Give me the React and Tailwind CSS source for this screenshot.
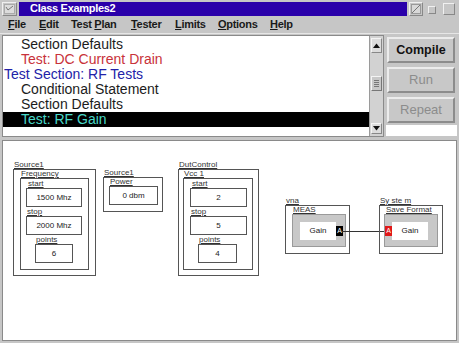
import React from 'react'

const rows = [
  { text: 'Section Defaults', indent: true, color: 'text-[#1c1c1c]' },
  { text: 'Test: DC Current Drain', indent: true, color: 'text-[#c8323a]' },
  { text: 'Test Section: RF Tests', indent: false, color: 'text-[#2222a8]' },
  { text: 'Conditional Statement', indent: true, color: 'text-[#1c1c1c]' },
  { text: 'Section Defaults', indent: true, color: 'text-[#1c1c1c]' },
  { text: 'Test: RF Gain', indent: true, color: 'text-[#48d8c8]', selected: true },
]

const menus = [
  { pre: '', key: 'F', post: 'ile', w: 'w-[31px]' },
  { pre: '', key: 'E', post: 'dit', w: 'w-[32px]' },
  { pre: 'Test ', key: 'P', post: 'lan', w: 'w-[60px]' },
  { pre: '', key: 'T', post: 'ester', w: 'w-[44px]' },
  { pre: '', key: 'L', post: 'imits', w: 'w-[43px]' },
  { pre: '', key: 'O', post: 'ptions', w: 'w-[52px]' },
  { pre: '', key: 'H', post: 'elp', w: 'w-[40px]' },
]

function Lbl({ children, className = '' }) {
  return (
    <div className={`h-[8px] text-[8px] leading-[8px] underline text-[#333] whitespace-nowrap ${className}`}>
      {children}
    </div>
  )
}

function Field({ label, value, w, boxMl, lblMl }) {
  return (
    <div className={boxMl}>
      <Lbl className={lblMl}>{label}</Lbl>
      <div className={`${w} h-[19px] border border-[#555] flex items-center justify-center text-[8px] text-[#222]`}>
        {value}
      </div>
    </div>
  )
}

function RangeGroup({ title, sub, left, outerW, innerW, innerMl, startW, startMl, pointsW, values }) {
  return (
    <div className={`absolute top-[20px] ${left}`}>
      <Lbl className="ml-[1px]">{title}</Lbl>
      <div className={`${outerW} h-[107px] border border-[#555] ${innerMl}`}>
        <Lbl className="ml-[1px]">{sub}</Lbl>
        <div className={`${innerW} h-[92px] border border-[#555] pt-[1px] flex flex-col gap-[1px]`}>
          <Field label="start" value={values[0]} w={startW} boxMl={startMl} lblMl="ml-[2px]" />
          <Field label="stop" value={values[1]} w={startW} boxMl={startMl} lblMl="ml-[1px]" />
          <Field label="points" value={values[2]} w={pointsW} boxMl="ml-[14px]" lblMl="ml-[1px]" />
        </div>
      </div>
    </div>
  )
}

function Diagram() {
  return (
    <div className="relative mx-[2px] h-[201px] bg-white border border-[#8a8a8a] overflow-hidden font-['Liberation_Sans',Arial,sans-serif]">
      <RangeGroup
        title="Source1"
        sub="Frequency"
        left="left-[10px]"
        outerW="w-[83px]"
        innerMl="pl-[6px]"
        innerW="w-[69px]"
        startW="w-[56px]"
        startMl="ml-[5px]"
        pointsW="w-[38px]"
        values={['1500 Mhz', '2000 Mhz', '6']}
      />

      {/* Source1 power */}
      <div className="absolute left-[100px] top-[28px]">
        <Lbl className="ml-[1px]">Source1</Lbl>
        <div className="w-[60px] h-[35px] border border-[#555] pl-[5px]">
          <Lbl className="ml-[1px]">Power</Lbl>
          <div className="w-[49px] h-[19px] border border-[#555] flex items-center justify-center text-[8px] text-[#222]">
            0 dbm
          </div>
        </div>
      </div>

      <RangeGroup
        title="DutControl"
        sub="Vcc 1"
        left="left-[175px]"
        outerW="w-[81px]"
        innerMl="pl-[4px]"
        innerW="w-[70px]"
        startW="w-[57px]"
        startMl="ml-[6px]"
        pointsW="w-[39px]"
        values={['2', '5', '4']}
      />

      {/* vna */}
      <div className="absolute left-[282px] top-[56px]">
        <Lbl className="ml-[1px]">vna</Lbl>
        <div className="w-[65px] h-[49px] border border-[#555] pl-[6px]">
          <Lbl className="ml-[1px]">MEAS</Lbl>
          <div className="w-[54px] h-[33px] bg-[#c8c8c8] border border-[#9a9a9a] flex items-center pl-[7px]">
            <div className="w-[36px] h-[18px] bg-white flex items-center justify-center text-[8px] text-[#222]">Gain</div>
            <div className="w-[7px] h-[10px] bg-black text-white text-[7px] leading-[10px] text-center">A</div>
          </div>
        </div>
      </div>

      {/* connector */}
      <div className="absolute left-[339px] top-[90px] w-[43px] h-[1px] bg-[#333]" />

      {/* System */}
      <div className="absolute left-[376px] top-[56px]">
        <Lbl className="ml-[1px]">Sy ste m</Lbl>
        <div className="w-[64px] h-[49px] border border-[#555] pl-[4px]">
          <Lbl className="ml-[2px]">Save Format</Lbl>
          <div className="w-[54px] h-[33px] bg-[#c8c8c8] border border-[#9a9a9a] flex items-center">
            <div className="w-[7px] h-[10px] bg-[#e01818] text-white text-[7px] leading-[10px] text-center">A</div>
            <div className="w-[36px] h-[18px] bg-white flex items-center justify-center text-[8px] text-[#222]">Gain</div>
          </div>
        </div>
      </div>
    </div>
  )
}

function Scrollbar() {
  return (
    <div className="w-[14px] bg-[#d2d2d2] border-l border-[#9a9a9a] flex flex-col items-center py-[2px]">
      <div className="w-[11px] h-[15px] bg-[#dcdcdc] border border-t-[#f4f4f4] border-l-[#f4f4f4] border-b-[#888] border-r-[#888] flex items-center justify-center">
        <svg width="7" height="5" viewBox="0 0 7 5"><path d="M0 5 L3.5 0.5 L7 5 Z" fill="#111" /></svg>
      </div>
      <div className="flex-1 w-full flex flex-col items-center">
        <div className="mt-[23px] w-[11px] h-[15px] bg-[#c8c8c8] border border-t-[#f4f4f4] border-l-[#f4f4f4] border-b-[#777] border-r-[#777] flex flex-col items-center justify-center gap-[1px]">
          <div className="w-[5px] h-[1px] bg-[#777]" />
          <div className="w-[5px] h-[1px] bg-[#777]" />
          <div className="w-[5px] h-[1px] bg-[#777]" />
          <div className="w-[5px] h-[1px] bg-[#777]" />
        </div>
      </div>
      <div className="w-[11px] h-[11px] bg-[#dcdcdc] border border-t-[#f4f4f4] border-l-[#f4f4f4] border-b-[#888] border-r-[#888] flex items-center justify-center">
        <svg width="7" height="5" viewBox="0 0 7 5"><path d="M0 0 L7 0 L3.5 4.5 Z" fill="#111" /></svg>
      </div>
    </div>
  )
}

function Btn({ children, active }) {
  return (
    <div
      className={`w-[68px] h-[26px] bg-[#c8c8c8] border-2 border-t-[#ececec] border-l-[#ececec] border-b-[#8c8c8c] border-r-[#8c8c8c] flex items-center justify-center ${
        active ? 'text-[12.5px] font-bold text-[#111]' : 'text-[13px] text-[#8c8c8c]'
      }`}
    >
      {children}
    </div>
  )
}

export default function App() {
  return (
    <div className="w-[459px] h-[343px] bg-[#c6c6c6] overflow-hidden font-['Liberation_Sans',Arial,sans-serif] select-none">
      {/* Title bar */}
      <div className="h-[16px] flex items-center pt-[1px]">
        <div className="ml-[2px] w-[15px] h-[14px] border border-t-[#f0f0f0] border-l-[#f0f0f0] border-b-[#888] border-r-[#888] flex items-center justify-center">
          <svg width="11" height="10" viewBox="0 0 11 10">
            <rect x="0.5" y="0.5" width="10" height="9" fill="#dcdcdc" stroke="#aaa" />
            <path d="M2 3 L4 6 L9 2" fill="none" stroke="#777" strokeWidth="1" />
          </svg>
        </div>
        <div className="ml-[2px] w-[388px] h-[14px] bg-[#2a00aa] flex items-center pl-[11px]">
          <span className="text-white font-bold text-[11px] tracking-[-0.3px] leading-none">Class Examples2</span>
        </div>
        <div className="ml-[2px] w-[14px] h-[14px] border border-t-[#f0f0f0] border-l-[#f0f0f0] border-b-[#888] border-r-[#888] flex items-center justify-center">
          <svg width="10" height="10" viewBox="0 0 10 10">
            <rect x="0.5" y="0.5" width="9" height="9" fill="#d8d8d8" stroke="#999" />
            <path d="M1 9 L9 1" stroke="#777" />
          </svg>
        </div>
        <div className="ml-[5px] w-[8px] h-[8px] border border-t-[#f0f0f0] border-l-[#f0f0f0] border-b-[#888] border-r-[#888] mt-[2px]" />
        <div className="ml-[7px] w-[12px] h-[12px] border border-t-[#f0f0f0] border-l-[#f0f0f0] border-b-[#888] border-r-[#888]" />
      </div>

      {/* Menu bar */}
      <div className="h-[18px] flex items-center pl-[8px] border-b border-[#e6e6e6]">
        {menus.map((m) => (
          <div key={m.key + m.post} className={`${m.w} text-[11px] tracking-[-0.3px] font-bold text-[#1a1a1a] whitespace-nowrap leading-none`}>
            {m.pre}
            <span className="underline">{m.key}</span>
            {m.post}
          </div>
        ))}
      </div>

      {/* Top pane */}
      <div className="h-[104px] flex pt-[1px]">
        <div className="ml-[2px] w-[382px] h-[102px] border border-[#8a8a8a] bg-white flex">
          <div className="flex-1 pt-[1px]">
            {rows.map((r, i) => (
              <div
                key={i}
                className={`h-[15px] text-[14px] leading-[15px] whitespace-nowrap ${r.indent ? 'pl-[18px]' : 'pl-[1px]'} ${r.color} ${
                  r.selected ? 'bg-black' : ''
                }`}
              >
                {r.text}
              </div>
            ))}
          </div>
          <Scrollbar />
        </div>
        <div className="ml-[2px] w-[71px] flex flex-col">
          <div className="flex flex-col gap-[4px] pt-[2px] px-[1px]">
            <Btn active>Compile</Btn>
            <Btn>Run</Btn>
            <Btn>Repeat</Btn>
          </div>
          <div className="mt-[2px] flex-1 bg-white mb-[2px]" />
        </div>
      </div>

      <div className="h-[2px]" />
      <Diagram />
    </div>
  )
}
